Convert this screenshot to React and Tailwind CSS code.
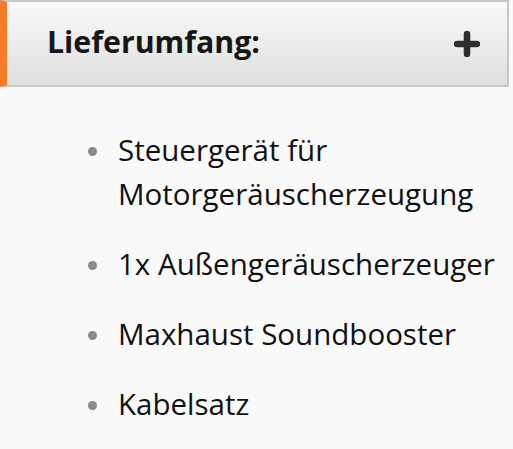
import React from 'react';

const items = ['Steuergerät für Motorgeräuscherzeugung', '1x Außengeräuscherzeuger', 'Maxhaust Soundbooster', 'Kabelsatz'];

function PlusIcon() {
  return (
    <svg width="26" height="26" viewBox="0 0 26 26" className="block">
      <path d="M13 3v20M3 13h20" stroke="#2e2e2e" strokeWidth="6.5" strokeLinecap="round" />
    </svg>
  );
}

export default function App() {
  return (
    <div
      className="w-[513px] h-[449px] overflow-hidden bg-[#f9f9f9] text-[#111]"
      style={{ fontFamily: '"Open Sans", "Noto Sans", sans-serif' }}
    >
      <div className="w-[509px] h-[87px] flex items-center justify-between border-t-2 border-b-2 border-r-2 border-[#c6c6c6] border-l-[7px] border-l-[#f77b2a] bg-gradient-to-b from-[#f9f9f9] to-[#dfdfdf] pl-10 pr-[27px]">
        <h2 className="text-[30.3px] font-bold leading-none text-[#161616] -mt-[2px]">Lieferumfang:</h2>
        <PlusIcon />
      </div>

      <ul className="pt-[41px] pl-[118px] pr-1 flex flex-col gap-[26px]">
        {items.map((item) => (
          <li key={item} className="relative text-[29.5px] leading-[44px]">
            <span className="absolute -left-[30px] top-[19px] w-[9px] h-[9px] rounded-full bg-[#8a8a8a]" />
            {item}
          </li>
        ))}
      </ul>
    </div>
  );
}
